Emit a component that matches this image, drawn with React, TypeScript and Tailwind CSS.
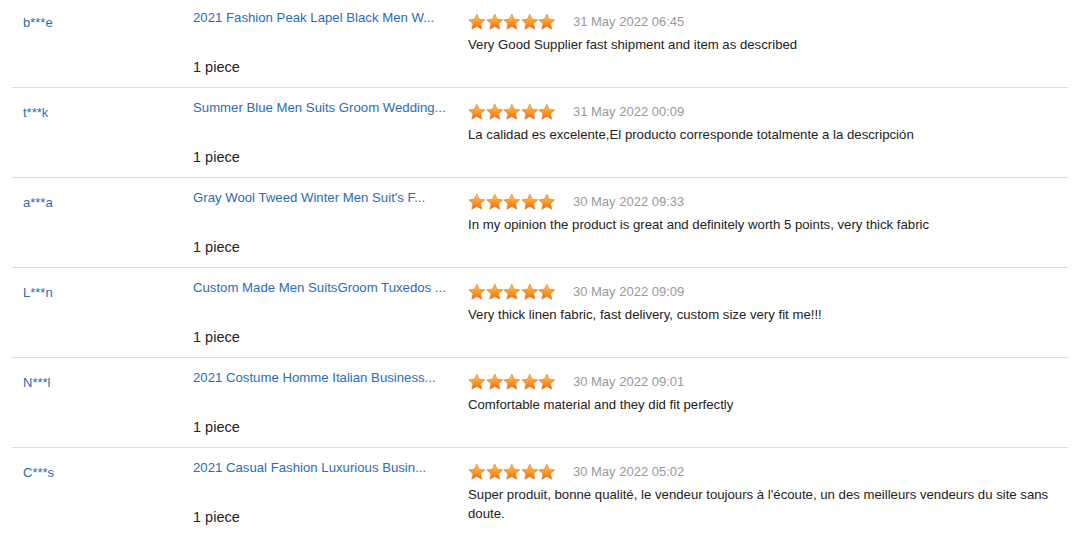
import React from 'react'

interface Review {
  user: string
  product: string
  date: string
  text: string
}

const reviews: Review[] = [
  {
    user: 'b***e',
    product: '2021 Fashion Peak Lapel Black Men W...',
    date: '31 May 2022 06:45',
    text: 'Very Good Supplier fast shipment and item as described',
  },
  {
    user: 't***k',
    product: 'Summer Blue Men Suits Groom Wedding...',
    date: '31 May 2022 00:09',
    text: 'La calidad es excelente,El producto corresponde totalmente a la descripción',
  },
  {
    user: 'a***a',
    product: "Gray Wool Tweed Winter Men Suit's F...",
    date: '30 May 2022 09:33',
    text: 'In my opinion the product is great and definitely worth 5 points, very thick fabric',
  },
  {
    user: 'L***n',
    product: 'Custom Made Men SuitsGroom Tuxedos ...',
    date: '30 May 2022 09:09',
    text: 'Very thick linen fabric, fast delivery, custom size very fit me!!!',
  },
  {
    user: 'N***l',
    product: '2021 Costume Homme Italian Business...',
    date: '30 May 2022 09:01',
    text: 'Comfortable material and they did fit perfectly',
  },
  {
    user: 'C***s',
    product: '2021 Casual Fashion Luxurious Busin...',
    date: '30 May 2022 05:02',
    text: "Super produit, bonne qualité, le vendeur toujours à l'écoute, un des meilleurs vendeurs du site sans doute.",
  },
]

function Star({ id }: { id: string }) {
  return (
    <svg width="17.6" height="18" viewBox="0 0 24 24" className="shrink-0">
      <defs>
        <linearGradient id={id} x1="0" y1="0" x2="0" y2="1">
          <stop offset="0%" stopColor="#ffc85a" />
          <stop offset="50%" stopColor="#fb9a2a" />
          <stop offset="100%" stopColor="#ec6a12" />
        </linearGradient>
      </defs>
      <path
        d="M12 1.2l3.2 7.1 7.7.8-5.8 5.2 1.7 7.6L12 18l-6.8 3.9 1.7-7.6L1.1 9.1l7.7-.8z"
        fill={`url(#${id})`}
        stroke="#e0761a"
        strokeWidth="0.8"
        strokeLinejoin="round"
      />
    </svg>
  )
}

function Stars({ row }: { row: number }) {
  return (
    <div className="flex">
      {[0, 1, 2, 3, 4].map((i) => (
        <Star key={i} id={`star-${row}-${i}`} />
      ))}
    </div>
  )
}

export default function App() {
  return (
    <div
      className="w-[1088px] h-[536px] overflow-hidden bg-white"
      style={{ fontFamily: '"Liberation Sans", Arial, sans-serif' }}
    >
      <div className="mx-[12px] w-[1056px] -mt-[2px]">
        {reviews.map((r, idx) => (
          <div key={r.user} className="flex h-[90px] border-b border-[#dcdcdc]">
            {/* Buyer */}
            <div className="w-[181px] shrink-0 pl-[11px] pt-[12px]">
              <span className="text-[13px] leading-[16px] text-[#2a6cb5]">{r.user}</span>
            </div>

            {/* Product + quantity */}
            <div className="w-[275px] shrink-0 pt-[12px]">
              <div className="text-[13.2px] leading-[16px] text-[#2a6cb5] whitespace-nowrap">
                {r.product}
              </div>
              <div className="mt-[32px] text-[14.5px] leading-[18px] text-[#222]">1 piece</div>
            </div>

            {/* Rating + feedback */}
            <div className="flex-1 pt-[15px] pr-[10px]">
              <div className="flex items-center h-[18px]">
                <Stars row={idx} />
                <span className="ml-[17px] text-[13px] text-[#999]">{r.date}</span>
              </div>
              <p className="mt-[4px] text-[13.2px] leading-[19px] text-[#222] max-w-[590px]">
                {r.text}
              </p>
            </div>
          </div>
        ))}
      </div>
    </div>
  )
}
